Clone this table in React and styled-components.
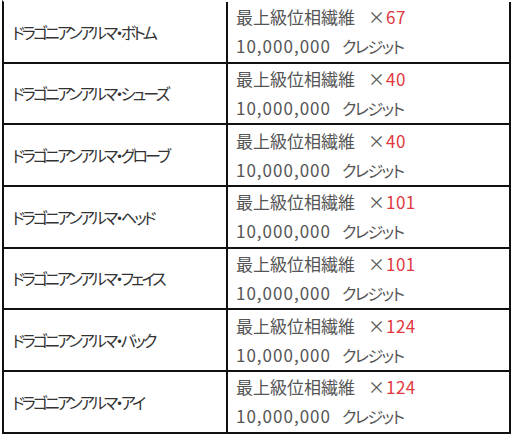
import styled, { createGlobalStyle } from 'styled-components';

const items = [
  { name: 'ドラゴニアンアルマ・ボトム', count: 67 },
  { name: 'ドラゴニアンアルマ・シューズ', count: 40 },
  { name: 'ドラゴニアンアルマ・グローブ', count: 40 },
  { name: 'ドラゴニアンアルマ・ヘッド', count: 101 },
  { name: 'ドラゴニアンアルマ・フェイス', count: 101 },
  { name: 'ドラゴニアンアルマ・バック', count: 124 },
  { name: 'ドラゴニアンアルマ・アイ', count: 124 },
];

export default function App() {
  return (
    <>
      <GlobalStyle />
      <Table>
        <tbody>
          {items.map((item) => (
            <tr key={item.name}>
              <NameCell>{item.name}</NameCell>
              <CostCell>
                <Line>
                  最上級位相繊維<Times>×</Times><Count>{item.count}</Count>
                </Line>
                <Line>
                  <Amount>10,000,000</Amount><Credit>クレジット</Credit>
                </Line>
              </CostCell>
            </tr>
          ))}
        </tbody>
      </Table>
    </>
  );
}

const GlobalStyle = createGlobalStyle`
  body {
    margin: 0;
    background: #fff;
    font-family: "Noto Sans CJK JP", "Noto Sans", sans-serif;
    overflow: hidden;
  }
`;

const Table = styled.table`
  border-collapse: separate;
  border-spacing: 0;
  margin-left: 2px;
  width: 509px;
  border-left: 2px solid #111;
  border-top: 2px solid transparent;
  table-layout: fixed;

  td {
    border-right: 2px solid #111;
    border-bottom: 2px solid #111;
    height: 61.67px;
    box-sizing: border-box;
    vertical-align: middle;
    overflow: hidden;
  }
`;

const NameCell = styled.td`
  width: 224px;
  padding: 0 0 0 8px;
  font-size: 16px;
  letter-spacing: -2.8px;
  color: #333;
  font-feature-settings: "palt";
  white-space: nowrap;
`;

const CostCell = styled.td`
  padding: 0 0 1px 8px;
  font-size: 17px;
  color: #555;
`;

const Line = styled.div`
  line-height: 29px;
  height: 29px;
  white-space: nowrap;
`;

const Times = styled.span`
  margin-left: 13px;
`;

const Count = styled.span`
  margin-left: 1px;
  color: #e0383e;
  letter-spacing: 0.5px;
`;

const Amount = styled.span`
  letter-spacing: 1px;
`;

const Credit = styled.span`
  margin-left: 11px;
  font-size: 16px;
  letter-spacing: -1.5px;
  font-feature-settings: "palt";
`;
